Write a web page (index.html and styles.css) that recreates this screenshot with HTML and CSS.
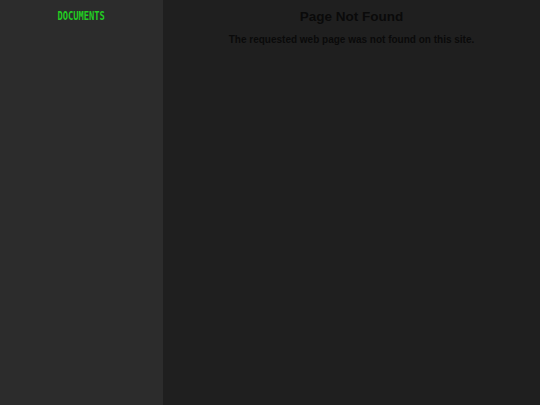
FILE: index.html
```html
<!DOCTYPE html>
<html>
<head>
<meta charset="utf-8">
<link rel="stylesheet" href="styles.css">
</head>
<body>
<div class="layout">
  <aside class="sidebar">
    <div class="nav-title">DOCUMENTS</div>
  </aside>
  <main class="content">
    <h1 class="title">Page Not Found</h1>
    <p class="message">The requested web page was not found on this site.</p>
  </main>
</div>
</body>
</html>
```

FILE: styles.css
```css
html, body {
  margin: 0;
  padding: 0;
  height: 100%;
  background: #1f1f1f;
}
.layout {
  display: flex;
  height: 405px;
}
.sidebar {
  width: 163px;
  flex: none;
  background: #2c2c2c;
  padding-top: 6px;
  box-sizing: border-box;
  text-align: center;
}
.nav-title {
  font-family: "DejaVu Sans Mono", monospace;
  font-size: 11.5px;
  line-height: 14px;
  font-weight: bold;
  color: #22cc22;
  display: inline-block;
  transform: scaleX(0.76);
}
.content {
  flex: 1;
  background: #1f1f1f;
  text-align: center;
  font-family: "Liberation Sans", Arial, sans-serif;
  color: #0a0a0a;
}
.title {
  margin: 9px 0 0;
  font-size: 13.5px;
  font-weight: bold;
}
.message {
  margin: 10px 0 0;
  font-size: 10px;
  font-weight: bold;
}
```
